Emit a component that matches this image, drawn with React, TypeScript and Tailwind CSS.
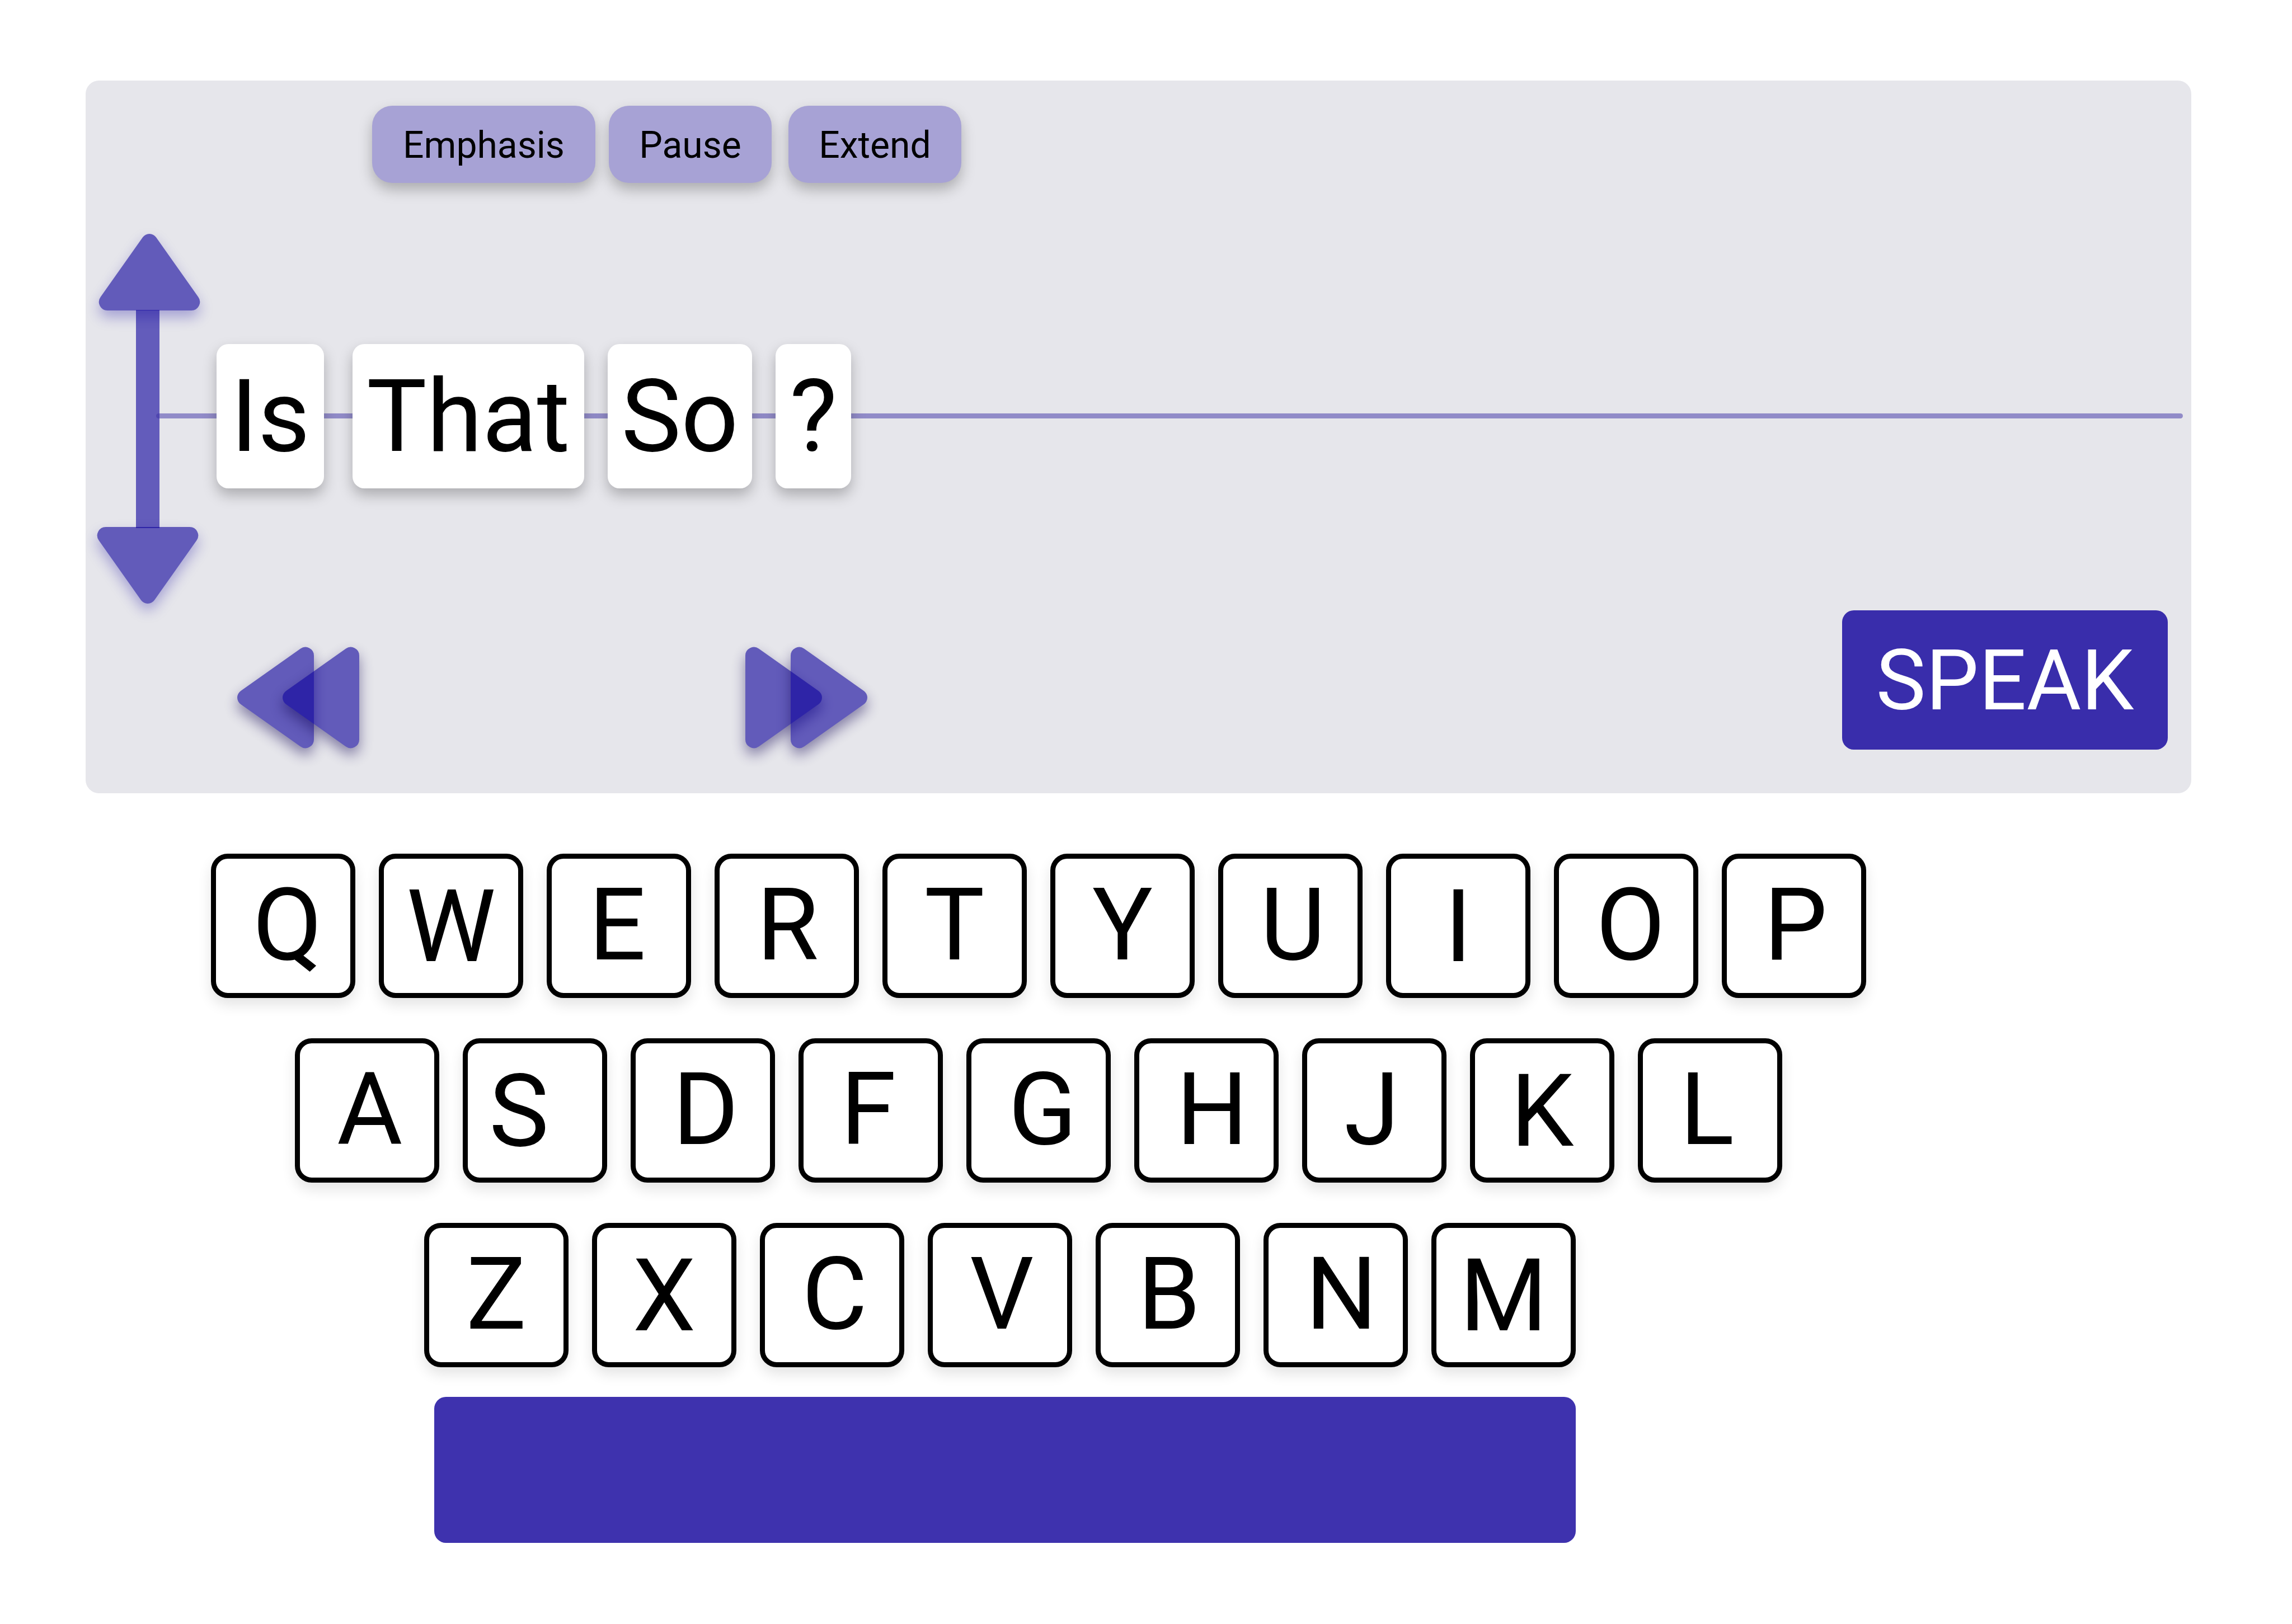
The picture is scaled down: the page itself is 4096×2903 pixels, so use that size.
type KeyAlign = "start" | "center" | "near";

const keyAlignClass: Record<KeyAlign, string> = {
  start: "justify-start pl-[66px] pb-[3px]",
  center: "justify-center pt-[3px]",
  near: "justify-start pl-[38px] pt-[3px]",
};

const alignments: Record<string, KeyAlign> = {
  W: "center",
  I: "center",
  K: "center",
  X: "center",
  M: "center",
  S: "near",
};

const words = [
  { text: "Is", box: "w-[192px]" },
  { text: "That", box: "ml-[51px] w-[414px]" },
  { text: "So", box: "ml-[42px] w-[258px]" },
  { text: "?", box: "ml-[42px] w-[135px]" },
];

const modifiers = [
  { text: "Emphasis", box: "w-[399px]" },
  { text: "Pause", box: "ml-[24px] w-[291px]" },
  { text: "Extend", box: "ml-[30px] w-[309px]" },
];

const TRIANGLE =
  "M78 6.3A14.6 14.6 0 0 1 102 6.3L177.4 113A15.2 15.2 0 0 1 165 137H15A15.2 15.2 0 0 1 2.6 113Z";

const violetShadow = "[filter:drop-shadow(0_12px_12px_rgba(12,0,155,0.5))]";
const darkShadow = "[filter:drop-shadow(0_12px_12px_rgba(12,0,80,0.75))]";

function PitchArrow() {
  return (
    <svg viewBox="0 0 183 661" className="h-[661px] w-[183px] overflow-visible" aria-hidden="true">
      <g opacity={0.6} className={violetShadow}>
        <path d={TRIANGLE} fill="#0c009b" transform="translate(3 0)" />
      </g>
      <rect x="69" y="136" width="42" height="390" fill="#0c009b" opacity={0.6} />
      <g opacity={0.6} className={violetShadow}>
        <path d={TRIANGLE} fill="#0c009b" transform="translate(0 661) scale(1 -1)" />
      </g>
    </svg>
  );
}

function DoubleArrow({ direction }: { direction: "back" | "forward" }) {
  const placements =
    direction === "back"
      ? ["translate(0 180) rotate(-90)", "translate(81 180) rotate(-90)"]
      : ["translate(137 0) rotate(90)", "translate(218 0) rotate(90)"];
  return (
    <svg viewBox="0 0 218 180" className="h-[180px] w-[218px] overflow-visible" aria-hidden="true">
      {placements.map((placement) => (
        <g key={placement} opacity={0.6} className={darkShadow}>
          <path d={TRIANGLE} fill="#0c009b" transform={placement} />
        </g>
      ))}
    </svg>
  );
}

function KeyRow({ letters, className }: { letters: string; className: string }) {
  return (
    <div className={`flex gap-[42px] ${className}`}>
      {letters.split("").map((letter) => (
        <button
          key={letter}
          type="button"
          className={`flex size-[258px] shrink-0 items-center rounded-[30px] border-[9px] border-black bg-white text-[180px] leading-[210px] shadow-[0_12px_24px_rgba(0,0,0,0.11)] ${keyAlignClass[alignments[letter] ?? "start"]}`}
        >
          {letter}
        </button>
      ))}
    </div>
  );
}

export default function App() {
  return (
    <main className="min-h-screen bg-white pt-[144px] pr-[180px] pb-[144px] pl-[153px] font-[Roboto,sans-serif] text-black">
      <section aria-label="Phrase" className="rounded-[24px] bg-[#e6e6eb] pt-[45px] pb-[78px]">
        <div className="flex pl-[512px]">
          {modifiers.map(({ text, box }) => (
            <button
              key={text}
              type="button"
              className={`flex h-[138px] items-center justify-center rounded-[36px] bg-[#a7a2d5] pt-[3px] text-[66px] leading-[78px] shadow-[0_12px_24px_rgba(0,0,0,0.25)] ${box}`}
            >
              {text}
            </button>
          ))}
        </div>

        <div className="mt-[91px] flex items-center pl-[21px]">
          <button type="button" aria-label="Pitch" className="shrink-0">
            <PitchArrow />
          </button>
          <div className="relative mb-[10px] -ml-[78px] flex flex-1 items-center pr-[15px] pl-[108px]">
            <div className="absolute right-[15px] left-0 h-[9px] rounded-full bg-[#3b30a6]/50" />
            {words.map(({ text, box }) => (
              <button
                key={text}
                type="button"
                className={`relative flex h-[258px] items-center justify-center rounded-[21px] bg-white pt-[3px] text-[180px] leading-[210px] shadow-[0_12px_24px_rgba(0,0,0,0.25)] ${box}`}
              >
                {text}
              </button>
            ))}
          </div>
        </div>

        <div className="mt-[12px] flex items-end pr-[42px] pl-[271px]">
          <button type="button" aria-label="Back" className="mb-[3px]">
            <DoubleArrow direction="back" />
          </button>
          <button type="button" aria-label="Forward" className="mb-[3px] ml-[690px]">
            <DoubleArrow direction="forward" />
          </button>
          <button
            type="button"
            className="ml-auto flex h-[249px] w-[582px] items-center justify-center rounded-[21px] bg-[#392dab] pt-[3px] text-[150px] leading-[176px] text-white"
          >
            SPEAK
          </button>
        </div>
      </section>

      <section aria-label="Keyboard" className="mt-[108px] flex flex-col gap-[72px]">
        <KeyRow letters="QWERTYUIOP" className="pl-[224px]" />
        <KeyRow letters="ASDFGHJKL" className="pl-[374px]" />
        <KeyRow letters="ZXCVBNM" className="pl-[605px]" />
      </section>
      <button
        type="button"
        aria-label="Space"
        className="mt-[53px] ml-[623px] block h-[261px] w-[2040px] rounded-[21px] bg-[#3e32ae]"
      />
    </main>
  );
}
